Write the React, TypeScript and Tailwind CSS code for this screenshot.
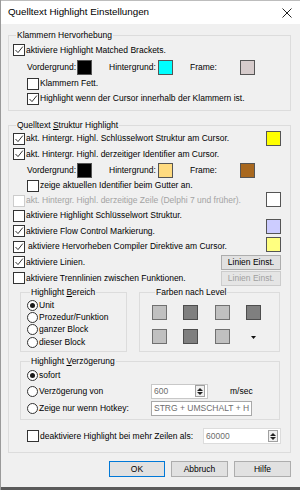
import React from "react";

type CheckProps = { checked?: boolean; disabled?: boolean };

function Check({ checked, disabled }: CheckProps) {
  return (
    <span
      className={`flex h-[12px] w-[12px] shrink-0 items-center justify-center border bg-white ${
        disabled ? "border-[#cccccc]" : "border-[#333333]"
      }`}
    >
      {checked && (
        <svg width="10" height="10" viewBox="0 0 10 10">
          <path d="M1.5 5 L4 7.6 L8.8 1.6" fill="none" stroke="#333333" strokeWidth="1" />
        </svg>
      )}
    </span>
  );
}

function Radio({ checked }: { checked?: boolean }) {
  return (
    <span className="flex h-[11px] w-[11px] shrink-0 items-center justify-center rounded-full border border-[#333333] bg-white">
      {checked && <span className="h-[5px] w-[5px] rounded-full bg-[#1a1a1a]" />}
    </span>
  );
}

function Swatch({ color, className = "" }: { color: string; className?: string }) {
  return <span className={`block h-[15px] w-[15px] shrink-0 border border-[#555555] ${color} ${className}`} />;
}

function Group({
  title,
  className = "",
  children,
}: {
  title: React.ReactNode;
  className?: string;
  children: React.ReactNode;
}) {
  return (
    <fieldset className={`border border-[#dcdcdc] ${className}`}>
      <legend className="ml-[3px] px-[1px] leading-[12px]">{title}</legend>
      {children}
    </fieldset>
  );
}

function WinButton({
  children,
  disabled,
  primary,
  className = "",
}: {
  children: React.ReactNode;
  disabled?: boolean;
  primary?: boolean;
  className?: string;
}) {
  return (
    <button
      className={`flex items-center justify-center border leading-none ${
        disabled
          ? "border-[#cccccc] bg-[#e5e5e5] text-[#a0a0a0]"
          : primary
          ? "border-[#0078d7] bg-[#e1e1e1] text-black"
          : "border-[#adadad] bg-[#e1e1e1] text-black"
      } ${className}`}
    >
      {children}
    </button>
  );
}

function Spinner() {
  return (
    <span className="flex h-[12px] w-[10px] flex-col items-center justify-center gap-[1px] border border-[#a0a0a0] bg-[#f0f0f0]">
      <svg width="6" height="3" viewBox="0 0 6 3">
        <path d="M0 3 L3 0 L6 3 Z" fill="#222" />
      </svg>
      <svg width="6" height="3" viewBox="0 0 6 3">
        <path d="M0 0 L3 3 L6 0 Z" fill="#222" />
      </svg>
    </span>
  );
}

export default function App() {
  return (
    <div className="flex h-[490px] w-[300px] flex-col overflow-hidden whitespace-nowrap border-l border-[#9a9a9a] bg-[#f0f0f0] font-['Liberation_Sans',Arial,sans-serif] text-[8.5px] text-black">
      {/* title bar */}
      <div className="flex h-[24px] shrink-0 items-center justify-between border-t border-[#bdbdbd] bg-white pl-[7px] pr-[8px]">
        <span className="text-[9.8px]">Quelltext Highlight Einstellungen</span>
        <svg width="10" height="10" viewBox="0 0 10 10">
          <path d="M0.5 0.5 L9.5 9.5 M9.5 0.5 L0.5 9.5" stroke="#222" strokeWidth="1" />
        </svg>
      </div>

      <div className="flex flex-1 flex-col pl-[7px] pr-[9px] pt-[5px]">
        <Group title="Klammern Hervorhebung" className="pb-[3px] pl-[4px] pr-[9px]">
          <div className="mt-[1px] flex h-[16px] items-center gap-[1px]">
            <Check checked />
            <span>aktiviere Highlight Matched Brackets.</span>
          </div>
          <div className="flex h-[19px] items-center pl-[14px]">
            <span className="w-[50px]">Vordergrund:</span>
            <Swatch color="bg-black" />
            <span className="ml-[17px] w-[49px]">Hintergrund:</span>
            <Swatch color="bg-[#00ffff]" />
            <span className="ml-[17px] w-[50px]">Frame:</span>
            <Swatch color="bg-[#d6cbcb]" />
          </div>
          <div className="flex h-[13px] items-center gap-[1px] pl-[14px]">
            <Check />
            <span>Klammern Fett.</span>
          </div>
          <div className="flex h-[17px] items-center gap-[1px] pl-[14px]">
            <Check checked />
            <span>Highlight wenn der Cursor innerhalb der Klammern ist.</span>
          </div>
        </Group>

        <Group
          title={
            <>
              Quelltext <span className="underline">S</span>truktur Highlight
            </>
          }
          className="mt-[8px] pb-[8px] pl-[4px] pr-[9px]"
        >
          <div className="flex h-[15px] items-center gap-[1px]">
            <Check checked />
            <span>akt. Hintergr. Highl. Schlüsselwort Struktur am Cursor.</span>
            <Swatch color="bg-[#ffff00]" className="ml-auto" />
          </div>
          <div className="flex h-[16px] items-center gap-[1px]">
            <Check checked />
            <span>akt. Hintergr. Highl. derzeitiger Identifier am Cursor.</span>
          </div>
          <div className="flex h-[16px] items-center pl-[14px]">
            <span className="w-[50px]">Vordergrund:</span>
            <Swatch color="bg-black" />
            <span className="ml-[17px] w-[49px]">Hintergrund:</span>
            <Swatch color="bg-[#ffdb80]" />
            <span className="ml-[17px] w-[50px]">Frame:</span>
            <Swatch color="bg-[#a8681f]" />
          </div>
          <div className="flex h-[15px] items-center gap-[1px] pl-[14px]">
            <Check />
            <span>zeige aktuellen Identifier beim Gutter an.</span>
          </div>
          <div className="flex h-[15px] items-center gap-[1px]">
            <Check disabled />
            <span className="text-[#a3a3a3]">akt. Hintergr. Highl. derzeitige Zeile (Delphi 7 und früher).</span>
            <Swatch color="bg-white" className="mb-[3px] ml-auto" />
          </div>
          <div className="flex h-[15px] items-center gap-[1px]">
            <Check />
            <span>aktiviere Highlight Schlüsselwort Struktur.</span>
          </div>
          <div className="flex h-[16px] items-center gap-[1px]">
            <Check checked />
            <span>aktiviere Flow Control Markierung.</span>
            <Swatch color="bg-[#ccccff]" className="mb-[9px] ml-auto" />
          </div>
          <div className="flex h-[15px] items-center gap-[1px]">
            <Check checked />
            <span className="ml-[2px]">aktiviere Hervorheben Compiler Direktive am Cursor.</span>
            <Swatch color="bg-[#ffff80]" className="mb-[4px] ml-auto" />
          </div>
          <div className="flex h-[16px] items-center gap-[1px]">
            <Check checked />
            <span>aktiviere Linien.</span>
            <WinButton className="ml-auto h-[15px] w-[60px]">Linien Einst.</WinButton>
          </div>
          <div className="flex h-[16px] items-center gap-[1px]">
            <Check />
            <span>aktiviere Trennlinien zwischen Funktionen.</span>
            <WinButton disabled className="ml-auto h-[15px] w-[60px]">
              Linien Einst.
            </WinButton>
          </div>

          <div className="flex gap-[12px] pl-[7px]">
            <Group
              title={
                <>
                  Highlight <span className="underline">B</span>ereich
                </>
              }
              className="w-[107px] pb-[3px] pl-[6px]"
            >
              <div className="mt-[1px] flex h-[12px] items-center gap-[1px]">
                <Radio checked />
                <span>Unit</span>
              </div>
              <div className="flex h-[12px] items-center gap-[1px]">
                <Radio />
                <span>Prozedur/Funktion</span>
              </div>
              <div className="flex h-[13px] items-center gap-[1px]">
                <Radio />
                <span>ganzer Block</span>
              </div>
              <div className="flex h-[12px] items-center gap-[1px]">
                <Radio />
                <span>dieser Block</span>
              </div>
            </Group>
            <Group title="Farben nach Level" className="w-[141px] pl-[12px]">
              <div className="mt-[7px] grid w-[109px] grid-cols-4 gap-x-[16px] gap-y-[9px]">
                <span className="h-[15px] w-[15px] border border-[#707070] bg-[#c0c0c0]" />
                <span className="h-[15px] w-[15px] border border-[#4d4d4d] bg-[#7f7f7f]" />
                <span className="h-[15px] w-[15px] border border-[#707070] bg-[#c0c0c0]" />
                <span className="h-[15px] w-[15px] border border-[#4d4d4d] bg-[#7f7f7f]" />
                <span className="h-[15px] w-[15px] border border-[#707070] bg-[#c0c0c0]" />
                <span className="h-[15px] w-[15px] border border-[#4d4d4d] bg-[#7f7f7f]" />
                <span className="h-[15px] w-[15px] border border-[#707070] bg-[#c0c0c0]" />
                <span className="flex h-[15px] w-[15px] items-center justify-center pt-[2px]">
                  <svg width="5" height="3" viewBox="0 0 5 3">
                    <path d="M0 0 L5 0 L2.5 3 Z" fill="#111" />
                  </svg>
                </span>
              </div>
            </Group>
          </div>

          <Group
            title={
              <>
                Highlight <span className="underline">V</span>erzögerung
              </>
            }
            className="ml-[7px] mt-[3px] w-[260px] pb-[2px] pl-[6px]"
          >
            <div className="flex h-[16px] items-center gap-[1px]">
              <Radio checked />
              <span>sofort</span>
            </div>
            <div className="flex h-[16px] items-center">
              <span className="flex w-[124px] items-center gap-[1px]">
                <Radio />
                <span>Verzögerung von</span>
              </span>
              <span className="flex h-[15px] w-[57px] items-center justify-between border border-[#c8c8c8] bg-white pl-[2px] pr-[2px] text-[#6d6d6d]">
                600
                <Spinner />
              </span>
              <span className="ml-[22px]">m/sec</span>
            </div>
            <div className="flex h-[18px] items-center">
              <span className="flex w-[124px] items-center gap-[1px]">
                <Radio />
                <span>Zeige nur wenn Hotkey:</span>
              </span>
              <span className="flex h-[15px] w-[101px] items-center border border-[#a8a8a8] bg-white pl-[2px] text-[#6d6d6d]">
                STRG + UMSCHALT + H
              </span>
            </div>
          </Group>

          <div className="mt-[8px] flex h-[16px] items-center gap-[1px] pl-[14px]">
            <Check />
            <span>deaktiviere Highlight bei mehr Zeilen als:</span>
            <span className="ml-auto flex h-[16px] w-[78px] items-center justify-between border border-[#dcdcdc] bg-white pl-[2px] pr-[2px] text-[#6d6d6d]">
              60000
              <Spinner />
            </span>
          </div>
        </Group>

        <div className="mt-[8px] flex justify-end gap-[6px]">
          <WinButton primary className="h-[16px] w-[56px]">
            OK
          </WinButton>
          <WinButton className="h-[16px] w-[57px]">Abbruch</WinButton>
          <WinButton className="h-[16px] w-[57px]">Hilfe</WinButton>
        </div>
      </div>

      <div className="h-[3px] shrink-0 bg-[#5a5a5a]" />
    </div>
  );
}
